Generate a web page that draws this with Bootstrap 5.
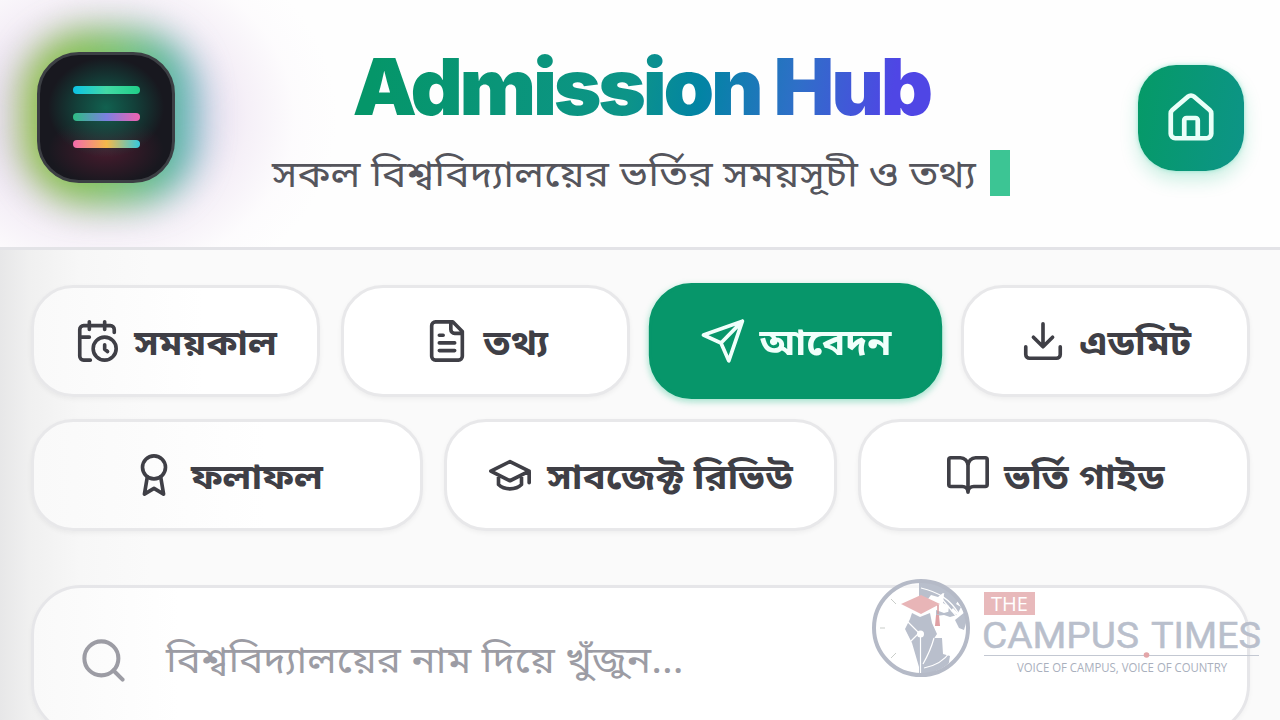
<!DOCTYPE html>
<html lang="bn">
<head>
<meta charset="utf-8">
<meta name="viewport" content="width=device-width, initial-scale=1">
<title>Admission Hub</title>
<link href="https://cdn.jsdelivr.net/npm/bootstrap@5.3.0/dist/css/bootstrap.min.css" rel="stylesheet">
<script src="https://cdn.jsdelivr.net/npm/bootstrap@5.3.0/dist/js/bootstrap.bundle.min.js"></script>
<style>
  html, body { height: 720px; overflow: hidden; }
  body { background: #fafafa; color: #3f3f46; font-family: "Noto Sans Bengali", "Noto Sans", "Inter", sans-serif; }
  .page-shade { background: linear-gradient(90deg, #e7e7e8 0, #f0f0f0 30px, #f7f7f7 80px, #fafafa 150px); height: 720px; }
  .top-bar { height: 250px; padding: 0 36px 0 37px; background: #fefefe; border-bottom: 3px solid #e3e3e7; }
  .menu-wrap { width: 138px; height: 131px; margin-top: 52px; }
  .halo { left: -170px; top: -130px; width: 470px; height: 390px; background: radial-gradient(ellipse closest-side, rgba(215,200,228,.62) 40%, rgba(230,215,236,.36) 62%, rgba(245,236,247,.15) 82%, rgba(255,255,255,0)); }
  .glow { inset: -22px -22px -21px -15px; border-radius: 68px; filter: blur(17px); background: linear-gradient(90deg, #93bd47 0, #80c058 40%, #72c27a 62%, #52b59e 84%, #72b0cc); }
  .menu-btn { width: 138px; height: 131px; border-radius: 42px; border: 3px solid #3c3f44; gap: 19px;
    background: radial-gradient(ellipse 58px 50px at 50% 42%, rgba(16,110,88,.85), rgba(16,90,75,.6) 50%, transparent), radial-gradient(ellipse 58px 34px at 50% 76%, rgba(120,30,60,.5), transparent), #18181f; }
  .menu-btn i { display: block; width: 67px; height: 8px; border-radius: 4px; position: relative; top: -1px; }
  .bar-a { background: linear-gradient(90deg, #0cc3e5, #43d9a5 50%, #20cf88); }
  .bar-b { background: linear-gradient(90deg, #2dbd83, #7c80e0 50%, #f062b0); }
  .bar-c { background: linear-gradient(90deg, #f26aac, #f5b84a 50%, #35c9dd); }
  .title-block { width: 738px; margin-right: 31px; padding-top: 42px; }
  .brand { font: 900 78.5px/90px "Inter", sans-serif; letter-spacing: -3.1px; margin: 0; padding: 0 4px; transform: scaleX(1.034);
    background: linear-gradient(100deg, #059669 5%, #0d9488 48%, #0284a4 60%, #2f6fc8 76%, #4f46e5 92%); -webkit-background-clip: text; background-clip: text; color: transparent; }
  .tagline { width: 738px; font-size: 34.5px; line-height: 50px; color: #55555c; }
  .wide { display: inline-block; white-space: nowrap; transform-origin: 0 50%; }
  .tagline .wide { transform: translateY(4px) scale(1.187, 1.08); }
  .caret { width: 20px; height: 46px; background: #3cc594; }
  .home-btn { width: 106px; height: 106px; margin-top: 65px; border-radius: 38px; color: #e9fff8; background: linear-gradient(100deg, #059a66, #0d9488); box-shadow: 0 9px 18px rgba(16,185,129,.22), 0 0 4px rgba(90,220,190,.5); }
  .content-area { padding: 35px 30px 0 31px; }
  .tab-row { display: grid; gap: 21px; }
  .four { grid-template-columns: repeat(4, minmax(0,1fr)); }
  .three { grid-template-columns: repeat(3, minmax(0,1fr)); margin-top: 22px; }
  .tab-btn { height: 112px; border-radius: 42px; border: 3px solid #e8e8ea; background: #fff; box-shadow: 0 2px 5px rgba(0,0,0,.05); gap: 14px; font-size: 33px; font-weight: 700; line-height: 1; color: #3f3f46; white-space: nowrap; }
  .tab-btn .wide { transform-origin: 50% 50%; transform: translateY(4px) scale(1.158, 1.07); margin: 0 var(--m); }
  .tab-btn.on { background: #07966a; border-color: #07966a; color: #f0fffb; transform: scale(1.015,1.035); box-shadow: 0 2px 6px rgba(16,185,129,.35); }
  .first-tab, .award-tab { background: linear-gradient(90deg, #f9f9f9, #fff 60%); }
  svg.ico { fill: none; stroke: currentColor; stroke-width: 1.9; stroke-linecap: round; stroke-linejoin: round; flex: none; }
  .home-btn svg.ico { stroke-width: 2.1; }
  .search-box { height: 150px; margin-top: 54px; border: 3px solid #e6e6e9; border-radius: 50px; background: linear-gradient(90deg, #f9f9f9, #fff 12%); color: #9c9ca4; padding: 0 0 0 44px; gap: 37px; font-size: 34.5px; box-shadow: 0 2px 5px rgba(0,0,0,.04); }
  .search-box .wide { transform: translateY(4px) scale(1.172, 1.07); }
  .watermark { left: 870px; top: 575px; }
</style>
</head>
<body>
<div class="page-shade position-relative">
  <header class="top-bar d-flex justify-content-between align-items-start position-relative overflow-hidden">
    <div class="menu-wrap position-relative">
      <div class="halo position-absolute"></div>
      <div class="glow position-absolute"></div>
      <button class="menu-btn position-relative d-flex flex-column align-items-center justify-content-center p-0" aria-label="Menu"><i class="bar-a"></i><i class="bar-b"></i><i class="bar-c"></i></button>
    </div>
    <div class="title-block d-flex flex-column align-items-center position-relative">
      <h1 class="brand">Admission Hub</h1>
      <div class="tagline d-flex align-items-center justify-content-between mt-3"><span class="wide">সকল বিশ্ববিদ্যালয়ের ভর্তির সময়সূচী ও তথ্য</span><span class="caret"></span></div>
    </div>
    <a class="home-btn d-flex align-items-center justify-content-center" href="#" aria-label="Home">
      <svg class="ico" width="54" height="54" viewBox="0 0 24 24"><path d="M15 21v-8a1 1 0 0 0-1-1h-4a1 1 0 0 0-1 1v8M3 10a2 2 0 0 1 .709-1.528l7-5.999a2 2 0 0 1 2.582 0l7 5.999A2 2 0 0 1 21 10v9a2 2 0 0 1-2 2H5a2 2 0 0 1-2-2z"/></svg>
    </a>
  </header>
  <main class="content-area">
    <nav class="tab-row four">
      <button class="tab-btn first-tab d-flex align-items-center justify-content-center p-0"><svg class="ico" width="46" height="46" viewBox="0 0 24 24"><path d="M21 7.500V6a2 2 0 0 0-2-2H5a2 2 0 0 0-2 2v14a2 2 0 0 0 2 2h3.500M16 2v4M8 2v4M3 10h5M17.500 17.500 16 16.300V14"/><circle cx="16" cy="16" r="6"/></svg><span class="wide" style="--m:10px">সময়কাল</span></button>
      <button class="tab-btn d-flex align-items-center justify-content-center p-0"><svg class="ico" width="46" height="46" viewBox="0 0 24 24"><path d="M15 2H6a2 2 0 0 0-2 2v16a2 2 0 0 0 2 2h12a2 2 0 0 0 2-2V7zM14 2v4a2 2 0 0 0 2 2h4M10 9H8M16 13H8M16 17H8"/></svg><span class="wide" style="--m:4px">তথ্য</span></button>
      <button class="tab-btn on d-flex align-items-center justify-content-center p-0"><svg class="ico" width="46" height="46" viewBox="0 0 24 24"><path d="m22 2-7 20-4-9-9-4ZM22 2 11 13"/></svg><span class="wide" style="--m:8px">আবেদন</span></button>
      <button class="tab-btn d-flex align-items-center justify-content-center p-0"><svg class="ico" width="46" height="46" viewBox="0 0 24 24"><path d="M21 15v4a2 2 0 0 1-2 2H5a2 2 0 0 1-2-2v-4M7 10l5 5 5-5M12 15V3"/></svg><span class="wide" style="--m:7px">এডমিট</span></button>
    </nav>
    <nav class="tab-row three">
      <button class="tab-btn award-tab d-flex align-items-center justify-content-center p-0"><svg class="ico" width="46" height="46" viewBox="0 0 24 24"><circle cx="12" cy="8" r="6"/><path d="M15.477 12.890 17 22l-5-3-5 3 1.523-9.110"/></svg><span class="wide" style="--m:9px">ফলাফল</span></button>
      <button class="tab-btn d-flex align-items-center justify-content-center p-0"><svg class="ico" width="46" height="46" viewBox="0 0 24 24"><path d="M22 10v6M2 10l10-5 10 5-10 5zM6 12v5c3 3 9 3 12 0v-5"/></svg><span class="wide" style="--m:17px">সাবজেক্ট রিভিউ</span></button>
      <button class="tab-btn d-flex align-items-center justify-content-center p-0"><svg class="ico" width="46" height="46" viewBox="0 0 24 24"><path d="M12 7v14M3 18a1 1 0 0 1-1-1V4a1 1 0 0 1 1-1h5a4 4 0 0 1 4 4 4 4 0 0 1 4-4h5a1 1 0 0 1 1 1v13a1 1 0 0 1-1 1h-6a3 3 0 0 0-3 3 3 3 0 0 0-3-3z"/></svg><span class="wide" style="--m:10px">ভর্তি গাইড</span></button>
    </nav>
    <div class="search-box d-flex align-items-center">
      <svg class="ico" width="51" height="51" viewBox="0 0 24 24"><circle cx="11" cy="11" r="8"/><path d="m21 21-4.300-4.300"/></svg>
      <span class="wide">বিশ্ববিদ্যালয়ের নাম দিয়ে খুঁজুন...</span>
    </div>
  </main>
  <svg class="watermark position-absolute" width="400" height="110" viewBox="870 575 400 110">
    <clipPath id="globe"><circle cx="921" cy="628" r="46"/></clipPath>
    <circle cx="921" cy="628" r="47" fill="#fff" fill-opacity=".6"/>
    <g clip-path="url(#globe)">
      <path fill="#b9bfcc" d="M919 580h14l14 4 8 8-6 4-6-3-5 4-7-2-3 4-9-3z"/>
      <path fill="#b9bfcc" d="M944 594l9-3 7 7-4 6 5 3-3 6-5-5-5 6 1-8-6-3zM955 620l4 8 5 2 2-7 3-3-4-8-5 4zM936 610l8 3 7-2 6 4-7 2-6-2-8 1z"/>
      <path fill="#b9bfcc" d="M912 613l8 4 10-4 2 10 5 11-6 9 3-5 8 0 1 16 7 2-2 12-14 8h-15v-9l-7-24-7-14 5-10z"/>
      <path stroke="#fff" stroke-width="1.2" fill="none" d="M920.500 631v44M905 619l14 14M908 644l11-11M923 664c4-7 8-15 11-26M924 668c10-2 20-7 26-16M942 599l15 18M921 588c17 4 29 11 38 26M928 674c10-2 17-6 22-11"/>
      <circle cx="920.500" cy="634" r="3.500" fill="#fff"/>
      <path stroke="#c9cdc9" d="M891 599l5 5M880 628h5M891 658l5-5"/>
    </g>
    <circle cx="921" cy="628" r="47" fill="none" stroke="#b5bac7" stroke-width="4"/>
    <path fill="#e8b5b7" d="M901 604l20-9 19 9-19 10z"/>
    <path stroke="#d99a9e" stroke-width="1.500" fill="none" d="M938 605v9"/>
    <path fill="#dfa0a4" d="M936 615h3l1 11h-5z"/>
    <rect x="984" y="592" width="51" height="23" fill="#e8b9bb"/>
    <text x="991" y="611" font-family="Open Sans" font-size="19.500" fill="#fff" textLength="37" lengthAdjust="spacingAndGlyphs">THE</text>
    <text x="982" y="648" font-family="Roboto" font-size="36.500" fill="#b9bfcc" stroke="#b9bfcc" stroke-width=".5" textLength="157" lengthAdjust="spacingAndGlyphs">CAMPUS</text>
    <text x="1151" y="648" font-family="Roboto" font-size="36.500" fill="#b9bfcc" stroke="#b9bfcc" stroke-width=".5" textLength="110" lengthAdjust="spacingAndGlyphs">TIMES</text>
    <path stroke="#c3c8d2" stroke-width="1.200" d="M984 655.500h275"/>
    <circle cx="1146.500" cy="655" r="2.800" fill="#e3a5a8"/>
    <text x="1017" y="672" font-family="Open Sans" font-size="12.500" fill="#a9afbd" textLength="210" lengthAdjust="spacingAndGlyphs">VOICE OF CAMPUS, VOICE OF COUNTRY</text>
  </svg>
</div>
</body>
</html>
